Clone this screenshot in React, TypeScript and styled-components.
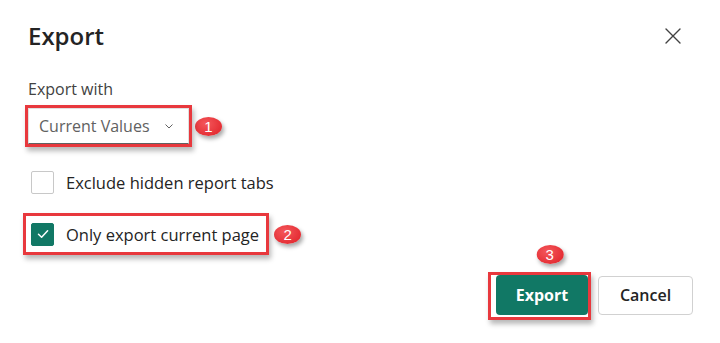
import React, { useState } from "react";
import styled, { createGlobalStyle } from "styled-components";

const GlobalStyle = createGlobalStyle`
  html, body {
    margin: 0;
    padding: 0;
    background: #fff;
  }
  body {
    font-family: "Open Sans", "Noto Sans", sans-serif;
    color: #242424;
  }
`;

const Dialog = styled.div`
  width: 720px;
  height: 343px;
  box-sizing: border-box;
  padding: 20px 27px 0 28px;
  display: flex;
  flex-direction: column;
  background: #fff;
`;

const Header = styled.div`
  display: flex;
  align-items: center;
  justify-content: space-between;
  height: 32px;
`;

const Title = styled.h1`
  margin: 0;
  font-size: 24px;
  font-weight: 600;
  line-height: 32px;
  color: #242424;
`;

const CloseButton = styled.button`
  width: 32px;
  height: 32px;
  margin-right: 4px;
  border: none;
  background: transparent;
  display: flex;
  align-items: center;
  justify-content: center;
  padding: 0;
  cursor: pointer;
`;

const FieldLabel = styled.div`
  margin-top: 26px;
  font-size: 16px;
  line-height: 22px;
  color: #424242;
`;

const AnnotatedRow = styled.div<{ $top?: number }>`
  display: flex;
  align-items: center;
  margin-top: ${(p) => p.$top ?? 0}px;
`;

const Highlight = styled.div<{ $pad: string; $shift: number }>`
  position: relative;
  border: 3px solid #e8383d;
  padding: ${(p) => p.$pad};
  margin-left: ${(p) => p.$shift}px;
  box-shadow: 2px 4px 5px rgba(0, 0, 0, 0.28);
  background: #fff;
  display: flex;
  align-items: center;
`;

const Badge = styled.div<{ $gap?: number }>`
  width: 27px;
  height: 19px;
  border-radius: 50%;
  margin-left: ${(p) => p.$gap ?? 0}px;
  background: radial-gradient(ellipse at 40% 35%, #f4575b 0%, #e52f35 70%, #d8262c 100%);
  box-shadow: 2px 3px 4px rgba(0, 0, 0, 0.35);
  color: #fff;
  font-family: "Liberation Sans", Arial, sans-serif;
  font-size: 15px;
  line-height: 19px;
  text-align: center;
  flex-shrink: 0;
`;

const TopBadge = styled(Badge)`
  position: absolute;
  left: 50%;
  top: -30px;
  transform: translateX(-12%);
`;

const Dropdown = styled.button`
  width: 161px;
  height: 36px;
  box-sizing: border-box;
  border: 1px solid #e0e0e0;
  border-bottom-color: #616161;
  border-radius: 0;
  background: #fff;
  display: flex;
  align-items: center;
  justify-content: space-between;
  padding: 0 14px 0 10px;
  font-family: inherit;
  font-size: 16px;
  color: #616161;
  cursor: pointer;
`;

const CheckRow = styled.label`
  display: flex;
  align-items: center;
  gap: 12px;
  height: 34px;
  cursor: pointer;
`;

const PlainCheckRow = styled(CheckRow)`
  margin-top: 18px;
  margin-left: 3px;
`;

const Box = styled.span<{ $checked: boolean }>`
  width: 23px;
  height: 23px;
  box-sizing: border-box;
  border-radius: 2px;
  border: 1px solid ${(p) => (p.$checked ? "#117865" : "#c8c8c8")};
  background: ${(p) => (p.$checked ? "#117865" : "#fff")};
  display: flex;
  align-items: center;
  justify-content: center;
  flex-shrink: 0;
`;

const CheckText = styled.span`
  font-size: 16.5px;
  color: #242424;
`;

const Footer = styled.div`
  margin-top: 17px;
  display: flex;
  justify-content: flex-end;
  align-items: center;
  gap: 7px;
`;

const PrimaryButton = styled.button`
  width: 92px;
  height: 40px;
  border: none;
  border-radius: 4px;
  background: #117865;
  color: #fff;
  font-family: inherit;
  font-size: 16px;
  font-weight: 700;
  cursor: pointer;
`;

const SecondaryButton = styled.button`
  width: 95px;
  height: 39px;
  margin-top: -2px;
  border: 1px solid #d1d1d1;
  border-radius: 4px;
  background: #fff;
  color: #242424;
  font-family: inherit;
  font-size: 16px;
  font-weight: 600;
  cursor: pointer;
`;

function Check() {
  return (
    <svg width="14" height="14" viewBox="0 0 14 14" fill="none">
      <path d="M2.5 7.3 L5.6 10.2 L11.6 3.8" stroke="#fff" strokeWidth="1.5" strokeLinecap="round" strokeLinejoin="round" />
    </svg>
  );
}

export default function App() {
  const [hidden, setHidden] = useState(false);
  const [current, setCurrent] = useState(true);

  return (
    <>
      <GlobalStyle />
      <Dialog>
        <Header>
          <Title>Export</Title>
          <CloseButton aria-label="Close">
            <svg width="16" height="16" viewBox="0 0 16 16">
              <path d="M1 1 L15 15 M15 1 L1 15" stroke="#424242" strokeWidth="1.4" strokeLinecap="round" />
            </svg>
          </CloseButton>
        </Header>

        <FieldLabel>Export with</FieldLabel>

        <AnnotatedRow $top={5}>
          <Highlight $pad="0" $shift={-3}>
            <Dropdown>
              Current Values
              <svg width="10" height="10" viewBox="0 0 10 10">
                <path d="M1.5 3.5 L5 7 L8.5 3.5" stroke="#616161" strokeWidth="1" fill="none" />
              </svg>
            </Dropdown>
          </Highlight>
          <Badge $gap={3}>1</Badge>
        </AnnotatedRow>

        <PlainCheckRow onClick={() => setHidden(!hidden)}>
          <Box $checked={hidden}>{hidden && <Check />}</Box>
          <CheckText>Exclude hidden report tabs</CheckText>
        </PlainCheckRow>

        <AnnotatedRow $top={14}>
          <Highlight $pad="1px 7px 1px 5px" $shift={-5}>
            <CheckRow onClick={() => setCurrent(!current)}>
              <Box $checked={current}>{current && <Check />}</Box>
              <CheckText>Only export current page</CheckText>
            </CheckRow>
          </Highlight>
          <Badge $gap={5}>2</Badge>
        </AnnotatedRow>

        <Footer>
          <Highlight $pad="0 0 2px 5px" $shift={0}>
            <TopBadge>3</TopBadge>
            <PrimaryButton>Export</PrimaryButton>
          </Highlight>
          <SecondaryButton>Cancel</SecondaryButton>
        </Footer>
      </Dialog>
    </>
  );
}
